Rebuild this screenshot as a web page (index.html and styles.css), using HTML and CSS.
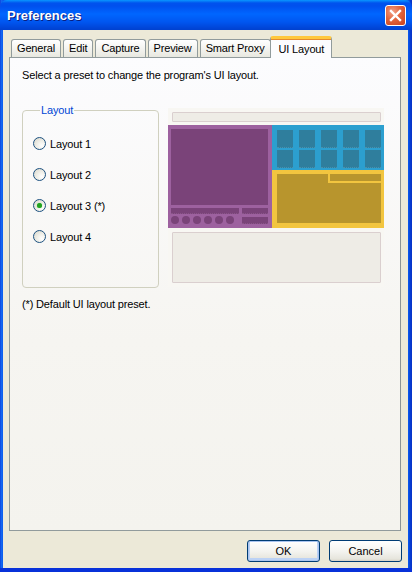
FILE: index.html
```html
<!DOCTYPE html>
<html>
	<head>
		<meta charset="utf-8">
		<title>Preferences</title>
		<link rel="stylesheet" href="styles.css">
	</head>
	<body>
		<div class="window">
			<div class="titlebar">
				<span class="title">Preferences</span>
				<span class="close">
					<svg width="21" height="21" viewBox="0 0 21 21">
						<path d="M6 6 L15 15 M15 6 L6 15" stroke="#fff" stroke-width="2.4" stroke-linecap="square"/>
					</svg>
				</span>
			</div>

			<div class="client">
				<div class="tabs">
					<div class="tab">General</div>
					<div class="tab">Edit</div>
					<div class="tab">Capture</div>
					<div class="tab">Preview</div>
					<div class="tab">Smart Proxy</div>
					<div class="tab active">UI Layout</div>
				</div>

				<div class="panel">
					<p class="intro">Select a preset to change the program's UI layout.</p>

					<div class="row">
						<fieldset class="group">
							<legend>Layout</legend>
							<label class="radio"><span class="dot"></span>Layout 1</label>
							<label class="radio"><span class="dot"></span>Layout 2</label>
							<label class="radio"><span class="dot on"></span>Layout 3 (*)</label>
							<label class="radio"><span class="dot"></span>Layout 4</label>
						</fieldset>

						<div class="preview">
							<div class="pv-bar"></div>
							<div class="pv-main">
								<div class="pv-purple">
									<div class="pv-screen"></div>
									<div class="pv-controls">
										<div class="pv-left">
											<div class="pv-seek"></div>
											<div class="pv-dots">
												<i></i><i></i><i></i><i></i><i></i><i></i>
											</div>
										</div>
										<div class="pv-right">
											<div class="pv-box small"></div>
											<div class="pv-box"></div>
										</div>
									</div>
								</div>
								<div class="pv-side">
									<div class="pv-blue">
										<i></i><i></i><i></i><i></i><i></i>
										<i></i><i></i><i></i><i></i><i></i>
									</div>
									<div class="pv-yellow">
										<div class="pv-yinner">
											<div class="pv-notch"></div>
										</div>
									</div>
								</div>
							</div>
							<div class="pv-bottom"></div>
						</div>
					</div>

					<p class="note">(*) Default UI layout preset.</p>
				</div>

				<div class="buttons">
					<button class="btn default">OK</button>
					<button class="btn">Cancel</button>
				</div>
			</div>
		</div>
	</body>
</html>
```

FILE: styles.css
```css
body, html {
	margin: 0;
	padding: 0;
	height: 100%;
}

body {
	background: #fff;
	font-family: "Liberation Sans", Arial, sans-serif;
	font-size: 11px;
	letter-spacing: -0.15px;
	color: #000;
}

.window {
	width: 412px;
	height: 572px;
	box-sizing: border-box;
	display: flex;
	flex-direction: column;
	background: linear-gradient(to right, #0831d9 0, #166aee 1px, #0a5bf0 3px, #0a5bf0 408px, #0635c9 411px);
	border-bottom: 4px solid #0831d9;
}

/* title bar */

.titlebar {
	height: 30px;
	flex: none;
	display: flex;
	align-items: center;
	padding: 0 6px 0 7px;
	border-radius: 7px 7px 0 0;
	background: linear-gradient(to bottom, #0997ff 0, #0053ee 3px, #0050ee 6px, #0066ff 14px, #0056f0 22px, #0045d8 28px, #0041cf 30px);
}

.title {
	flex: 1;
	color: #fff;
	font-weight: bold;
	font-size: 13px;
	letter-spacing: 0;
	text-shadow: 1px 1px 0 #0a1e80;
	padding-top: 1px;
}

.close {
	width: 21px;
	height: 21px;
	margin-top: 1px;
	box-sizing: border-box;
	border: 1px solid #fff;
	border-radius: 3px;
	background: radial-gradient(circle at 35% 30%, #f2a088 0, #e2643c 45%, #c8401b 100%);
	display: flex;
}

.close svg {
	margin: -1px;
}

/* client area */

.client {
	flex: 1;
	margin: 0 4px 0 3px;
	background: #ece9d8;
	padding: 6px 7px 0 6px;
	display: flex;
	flex-direction: column;
}

.tabs {
	display: flex;
	align-items: flex-end;
	height: 21px;
	padding-left: 2px;
	position: relative;
	z-index: 1;
}

.tab {
	height: 18px;
	box-sizing: border-box;
	line-height: 17px;
	padding: 0 5px;
	margin-right: 2px;
	border: 1px solid #919b9c;
	border-bottom: none;
	border-radius: 3px 3px 0 0;
	background: linear-gradient(to bottom, #fff 0, #f6f6f3 40%, #e8e8e0 100%);
	color: #000;
}

.tab.active {
	height: 22px;
	line-height: 20px;
	margin: 0 0 -1px -3px;
	padding: 0 7px 0 8px;
	background: #fcfcfe;
	border-top: 3px solid #ffc83c;
	border-radius: 3px 3px 0 0;
	box-shadow: inset 0 1px 0 #e68b2c;
}

.panel {
	height: 474px;
	box-sizing: border-box;
	border: 1px solid #919b9c;
	border-right-color: #8c9394;
	background: linear-gradient(to bottom, #fcfcfe 0, #f6f5f1 60%, #f4f3ee 100%);
	padding: 0 0 0 12px;
}

.intro {
	margin: 11px 0 0 0;
	line-height: 13px;
}

.row {
	display: flex;
	margin-top: 28px;
	height: 182px;
}

/* group box */

.group {
	width: 137px;
	height: 184px;
	box-sizing: border-box;
	margin: -6px 0 0 0;
	padding: 20px 0 0 10px;
	border: 1px solid #d0d0bf;
	border-radius: 4px;
	display: flex;
	flex-direction: column;
	min-width: 0;
}

.group legend {
	color: #0046d5;
	padding: 0 1px;
	margin-left: 7px;
	line-height: 13px;
}

.radio {
	display: flex;
	align-items: center;
	height: 13px;
	margin-bottom: 18px;
	white-space: nowrap;
}

.dot {
	width: 13px;
	height: 13px;
	box-sizing: border-box;
	border: 1px solid #1c5180;
	border-radius: 50%;
	background: radial-gradient(circle at 70% 70%, #fff 0, #f0f0ea 40%, #d6d4c8 100%);
	margin-right: 4px;
	display: flex;
	align-items: center;
	justify-content: center;
}

.dot.on::after {
	content: "";
	width: 5px;
	height: 5px;
	border-radius: 50%;
	background: #21a121;
	box-shadow: 0 0 1px #55d855;
}

.note {
	margin: 6px 0 0 0;
}

/* layout preview */

.preview {
	width: 216px;
	height: 179px;
	margin: -2px 0 0 9px;
	background: #f8f7f3;
	display: flex;
	flex-direction: column;
}

.pv-bar {
	height: 10px;
	flex: none;
	margin: 4px 3px 3px 4px;
	box-sizing: border-box;
	background: #eeece6;
	border: 1px solid #dacfcf;
	border-radius: 1px;
}

.pv-main {
	display: flex;
	flex: none;
	height: 103px;
}

.pv-purple {
	width: 104px;
	box-sizing: border-box;
	background: #9d619f;
	padding: 4px 4px 0 3px;
}

.pv-screen {
	height: 76px;
	background: #7a4379;
}

.pv-controls {
	display: flex;
	margin-top: 3px;
}

.pv-left {
	width: 68px;
}

.pv-seek {
	height: 5px;
	background: #7a4379;
	border-bottom: 1px dotted #8a5589;
}

.pv-dots {
	display: flex;
	margin-top: 2px;
	gap: 3px;
}

.pv-dots i {
	width: 8px;
	height: 8px;
	border-radius: 50%;
	background: #7a4379;
}

.pv-right {
	margin-left: 3px;
	flex: 1;
}

.pv-box {
	height: 6px;
	background: #7a4379;
	border-bottom: 1px dotted #8a5589;
}

.pv-box.small {
	height: 5px;
	margin-bottom: 3px;
}

.pv-side {
	flex: 1;
	display: flex;
	flex-direction: column;
}

.pv-blue {
	height: 45px;
	box-sizing: border-box;
	background: #2c9fcf;
	padding: 5px 3px 0 5px;
	display: grid;
	grid-template-columns: repeat(5, 16px);
	grid-auto-rows: 18px;
	column-gap: 6px;
	row-gap: 2px;
}

.pv-blue i {
	background: #2f7e9d;
	border-bottom: 1px dotted #4a90ac;
}

.pv-yellow {
	flex: 1;
	background: #f2c53f;
	padding: 4px 3px 5px 5px;
	display: flex;
}

.pv-yinner {
	flex: 1;
	background: #b8952d;
	display: flex;
	justify-content: flex-end;
	align-items: flex-start;
}

.pv-notch {
	width: 51px;
	height: 7px;
	background: #b8952d;
	border-left: 2px solid #f2c53f;
	border-bottom: 2px solid #f2c53f;
}

.pv-bottom {
	height: 51px;
	flex: none;
	margin: 4px 3px 0 4px;
	box-sizing: border-box;
	background: #eeece6;
	border: 1px solid #dacfcf;
	border-radius: 1px;
}

/* dialog buttons */

.buttons {
	display: flex;
	justify-content: flex-end;
	gap: 9px;
	margin-top: 9px;
	margin-right: -1px;
}

.btn {
	width: 73px;
	height: 22px;
	margin: 0;
	padding: 0;
	font: inherit;
	color: #000;
	border: 1px solid #003c74;
	border-radius: 3px;
	background: linear-gradient(to bottom, #fff 0, #f4f4f0 50%, #e6e5dc 90%, #d6d0c5 100%);
}

.btn.default {
	box-shadow: inset 0 0 0 1px #a9c4ef, inset 0 -1px 0 2px #bcd2f5;
}
```
